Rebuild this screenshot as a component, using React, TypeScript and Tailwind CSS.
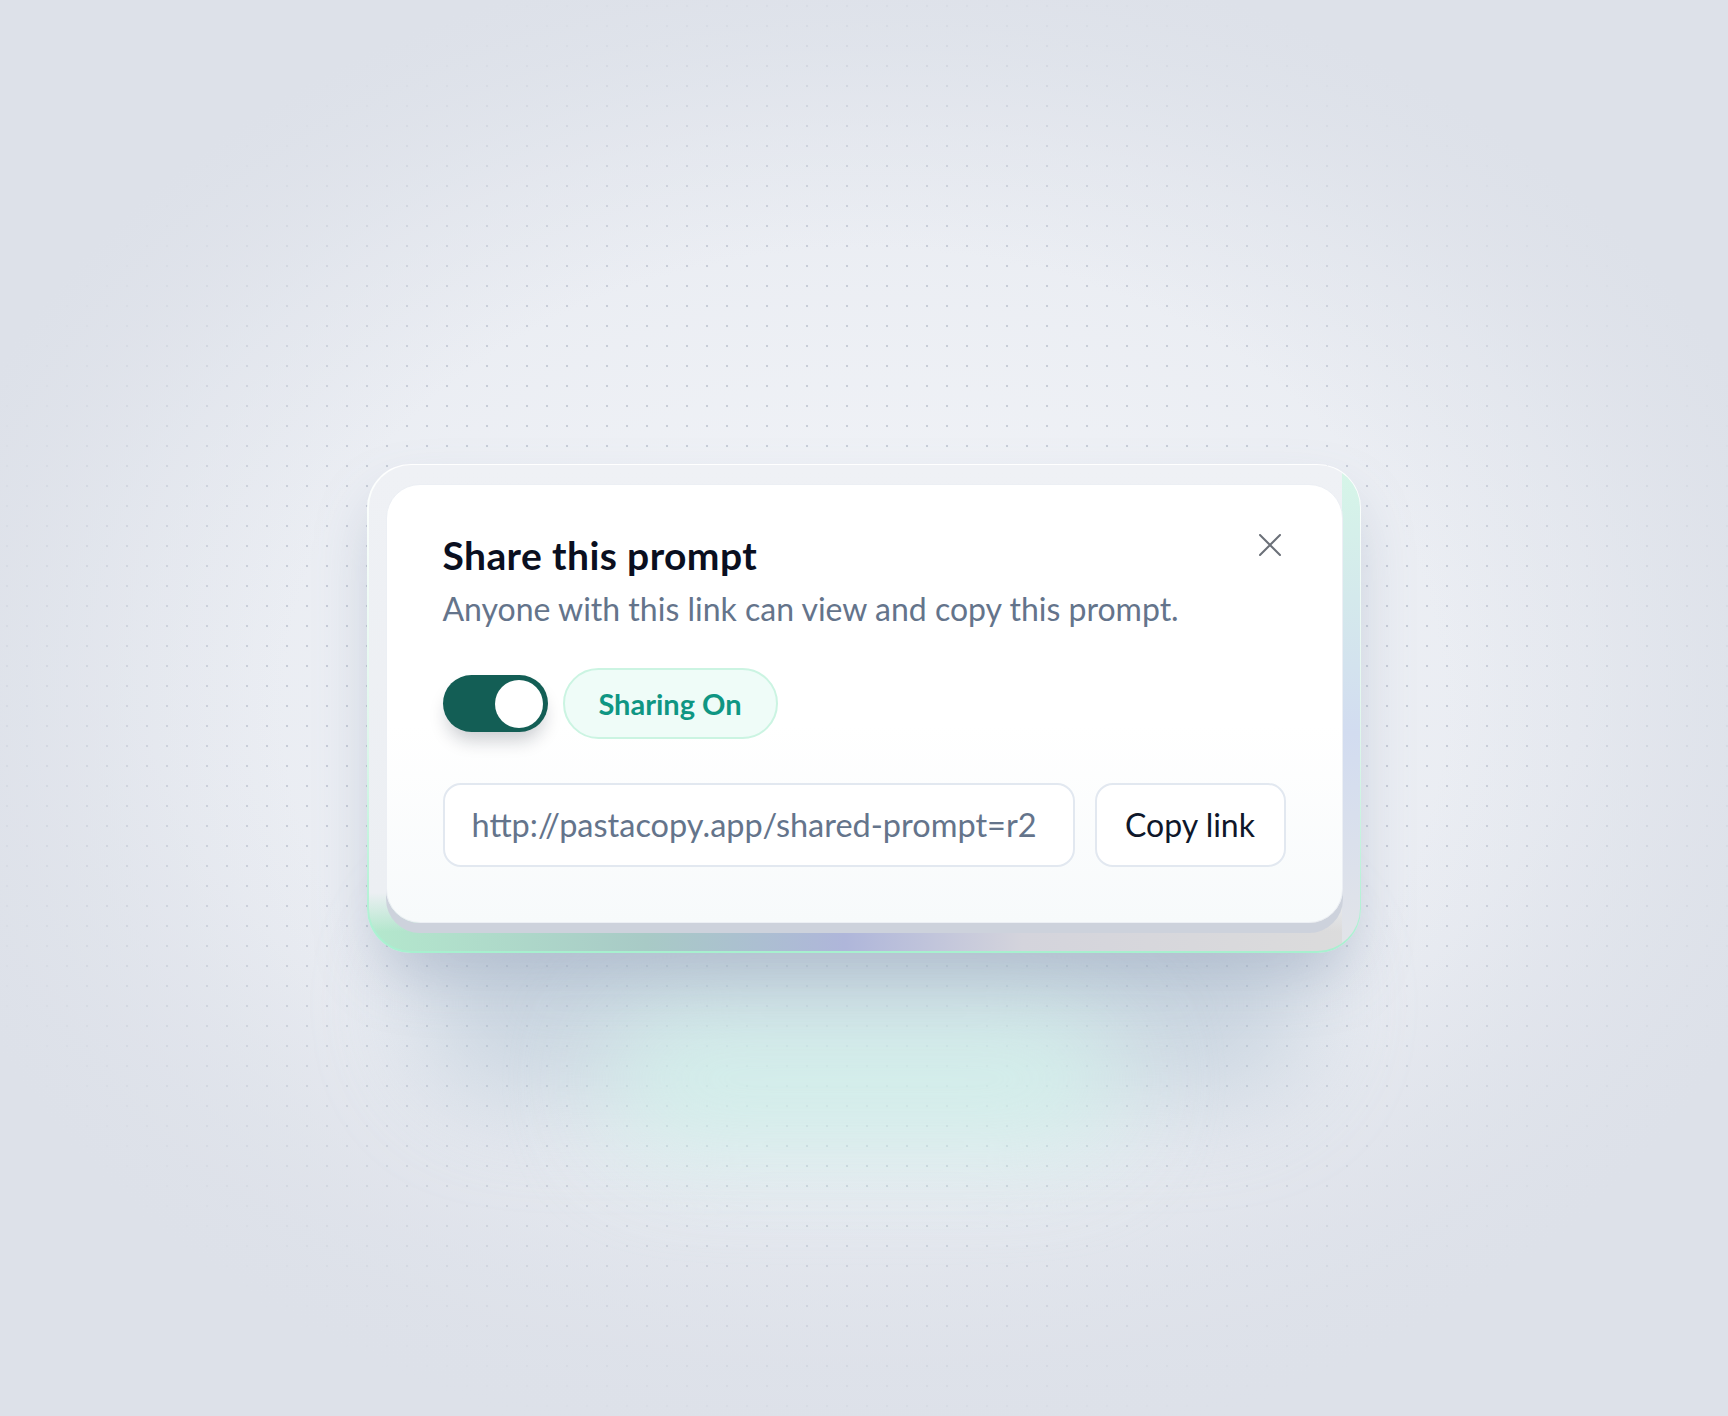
import React from "react";

export default function App() {
  return (
    <div
      className="relative flex h-[1416px] w-[1728px] items-center justify-center overflow-hidden [font-family:Lato,'Noto_Sans',sans-serif] [background:radial-gradient(ellipse_56%_54%_at_50%_50%,rgba(228,232,239,0)_60%,#dde1e9_100%),radial-gradient(circle,rgba(170,178,192,0.55)_1px,transparent_1.6px)_-3px_-4px/20px_20px,radial-gradient(ellipse_70%_60%_at_50%_45%,#f2f4f8_0%,#e9ecf2_60%,#dbdfe8_100%)]"
    >
      <div className="relative isolate">
        {/* soft glow beneath the card */}
        <div className="absolute left-1/2 top-[440px] -z-10 h-[200px] w-[900px] -translate-x-1/2 rounded-full bg-[#b8c8d6] opacity-60 blur-[50px]" />
        <div className="absolute left-1/2 top-[540px] -z-10 h-[150px] w-[520px] -translate-x-1/2 rounded-full bg-[#d3f3ec] opacity-80 blur-[50px]" />

        {/* outer frame */}
        <div className="w-[994px] rounded-[44px] bg-[linear-gradient(180deg,#ffffff_0%,#dff7ec_55%,#a7f0cf_100%)] p-[1.5px] shadow-[0_30px_60px_-10px_rgba(110,128,160,0.35)]">
          <div className="rounded-[42.5px] px-[17px] pb-[28px] pt-[19px] [background:linear-gradient(180deg,#d6f6e8_0%,#d2dcf0_55%,#e2e4e8_100%)_right/18px_100%_no-repeat,linear-gradient(180deg,#eff1f5_0%,#eceff3_88%,rgba(236,239,243,0)_96%),linear-gradient(90deg,#b4e8cd_0%,#a8cac6_28%,#afb6da_48%,#d4d4dc_66%,#dcdcdc_100%)]">
            {/* card */}
            <div className="rounded-[34px] border border-[#eceff4] bg-[linear-gradient(180deg,#ffffff_0%,#ffffff_55%,#f7fafb_100%)] px-[56px] pb-[55px] pt-[48px] shadow-[0_10px_0_0_#cdd2dc]">
              <div className="flex items-start justify-between">
                <h2 className="text-[39px] font-bold leading-[44px] tracking-[0.4px] text-[#0a0f1f]">
                  Share this prompt
                </h2>
                <button className="-mt-[4px] flex h-[32px] w-[32px] items-center justify-center text-[#6b7078]">
                  <svg width="22" height="22" viewBox="0 0 22 22" fill="none">
                    <path d="M1 1L21 21M21 1L1 21" stroke="currentColor" strokeWidth="2" strokeLinecap="round" />
                  </svg>
                </button>
              </div>
              <p className="mt-[14px] text-[32px] leading-[36px] text-[#64748b]">
                Anyone with this link can view and copy this prompt.
              </p>

              <div className="mt-[41px] flex items-center gap-[15px]">
                <div className="flex h-[57px] w-[105px] items-center justify-end rounded-full bg-[#135e55] p-[4.5px] shadow-[0_12px_18px_-4px_rgba(15,23,42,0.22)]">
                  <div className="h-[48px] w-[48px] rounded-full bg-white" />
                </div>
                <div className="flex h-[71px] w-[215px] items-center justify-center rounded-full border-2 border-[#cbf4e2] bg-[#effcf8] text-[29px] font-bold text-[#0f9683]">
                  Sharing On
                </div>
              </div>

              <div className="mt-[44px] flex items-center gap-[20px]">
                <div className="flex h-[84px] flex-1 items-center rounded-[18px] border-2 border-[#e2e8f0] bg-white pl-[27px] text-[32.5px] text-[#64748b]">
                  http://pastacopy.app/shared-prompt=r2
                </div>
                <button className="flex h-[84px] w-[191px] items-center justify-center rounded-[18px] border-2 border-[#e2e8f0] bg-white text-[32px] text-[#0f172a]">
                  Copy link
                </button>
              </div>
            </div>
          </div>
        </div>
      </div>
    </div>
  );
}
